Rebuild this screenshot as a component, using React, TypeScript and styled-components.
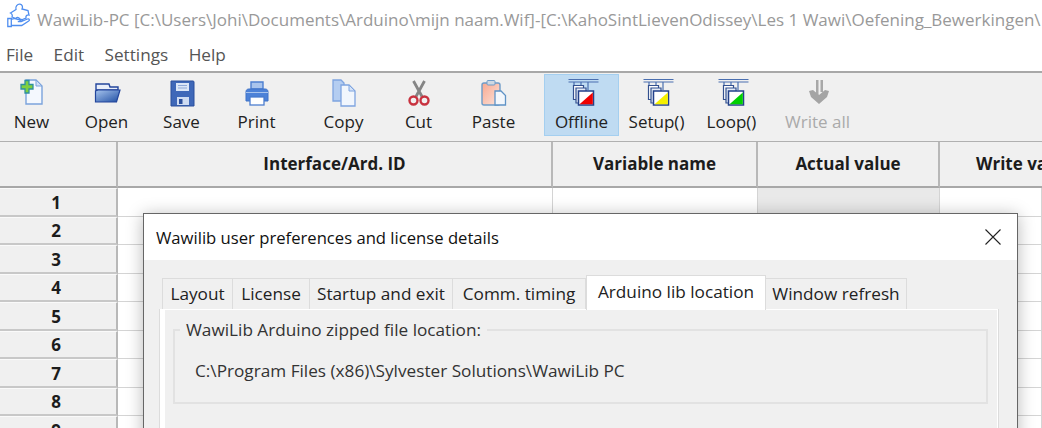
import React from 'react'
import styled, { createGlobalStyle } from 'styled-components'

const GlobalStyle = createGlobalStyle`
  html, body { margin: 0; padding: 0; background: #fff; }
  body { font-family: "Open Sans", "Noto Sans", "Liberation Sans", sans-serif; }
`

const Page = styled.div`
  position: relative;
  width: 1042px;
  height: 428px;
  overflow: hidden;
  background: #fff;
`
const TitleBar = styled.div`
  display: flex;
  align-items: center;
  height: 38px;
  padding-left: 7px;
  gap: 6px;
  white-space: nowrap;
  overflow: hidden;
  svg { margin-top: -6px; }
`
const TitleText = styled.span`
  font-size: 17px;
  color: #999;
`
const MenuBar = styled.div`
  display: flex;
  align-items: center;
  height: 33px;
  padding-left: 6px;
  gap: 20.4px;
  font-size: 17.2px;
  color: #555;
`
const Toolbar = styled.div`
  display: flex;
  height: 68px;
  background: #f0f0f0;
  border-top: 2px solid #a8a8a8;
  border-bottom: 1px solid #b0b0b0;
  box-sizing: content-box;
`
const ToolGroup = styled.div<{ $offset: number }>`
  display: flex;
  margin-left: ${({ $offset }) => $offset}px;
`
const ToolButton = styled.div<{ $active?: boolean; $disabled?: boolean }>`
  display: flex;
  flex-direction: column;
  align-items: center;
  box-sizing: border-box;
  width: 75px;
  height: 62px;
  margin-top: 1px;
  padding-top: 2px;
  font-size: 17px;
  line-height: 20px;
  white-space: nowrap;
  color: ${({ $disabled }) => ($disabled ? '#aaa' : '#222')};
  background: ${({ $active }) => ($active ? '#bfdbf2' : 'transparent')};
  border: 1px solid ${({ $active }) => ($active ? '#a4cff0' : 'transparent')};
  svg { display: block; flex: none; width: 34px; height: 34px; margin-bottom: 1px; }
`
const Grid = styled.div`
  display: grid;
  grid-template-columns: 118px 435px 205px 182px 1fr;
  grid-template-rows: 46px;
  grid-auto-rows: 28.5px;
`
const HeadCell = styled.div<{ $clipped?: boolean }>`
  display: flex;
  align-items: center;
  justify-content: ${({ $clipped }) => ($clipped ? 'flex-start' : 'center')};
  padding-left: ${({ $clipped }) => ($clipped ? 36 : 0)}px;
  padding-bottom: 1px;
  background: #f0f0f0;
  border-right: ${({ $clipped }) => ($clipped ? '0' : '2px solid #b8b8b8')};
  border-bottom: 2px solid #a8a8a8;
  font-size: 17px;
  font-weight: 700;
  color: #1c1c1c;
  white-space: nowrap;
  overflow: hidden;
`
const RowHead = styled.div`
  display: flex;
  align-items: center;
  justify-content: center;
  padding: 1px 4px 0 0;
  background: #f0f0f0;
  border-top: 1px solid #fafafa;
  border-right: 2px solid #b8b8b8;
  border-bottom: 2px solid #c8c8c8;
  font-size: 17px;
  font-weight: 700;
  color: #1c1c1c;
`
const Cell = styled.div<{ $shaded?: boolean }>`
  background: ${({ $shaded }) => ($shaded ? '#e9e9e9' : '#fff')};
  border-right: 1px solid #d4d4d4;
  border-bottom: 1px solid #d4d4d4;
`
const Dialog = styled.div`
  position: absolute;
  left: 143px;
  top: 213px;
  width: 875px;
  height: 260px;
  box-sizing: border-box;
  background: #f0f0f0;
  border: 1px solid #666;
  box-shadow: 0 2px 16px rgba(0, 0, 0, 0.28);
`
const DialogHead = styled.div`
  display: flex;
  align-items: center;
  justify-content: space-between;
  height: 46px;
  padding: 0 16px 0 12px;
  background: #fff;
  font-size: 16.65px;
  color: #111;
  svg { display: block; }
`
const DialogBody = styled.div`
  padding: 14px 19px 0 16px;
`
const TabStrip = styled.div`
  display: flex;
  align-items: flex-end;
  height: 35px;
  margin-left: 2px;
`
const Tab = styled.div<{ $active?: boolean; $width: number }>`
  display: flex;
  align-items: center;
  justify-content: center;
  box-sizing: border-box;
  width: ${({ $width }) => $width}px;
  height: ${({ $active }) => ($active ? 35 : 31)}px;
  margin-bottom: ${({ $active }) => ($active ? -1 : 0)}px;
  position: relative;
  z-index: ${({ $active }) => ($active ? 1 : 0)};
  padding-bottom: ${({ $active }) => ($active ? 4 : 1)}px;
  background: ${({ $active }) => ($active ? '#fff' : '#f0f0f0')};
  border: 1px solid #dcdcdc;
  border-bottom: 0;
  border-left-width: ${({ $active }) => ($active ? 1 : 0)}px;
  font-size: 17.2px;
  color: #222;
  white-space: nowrap;
  &:first-child { border-left-width: 1px; }
`
const Panel = styled.div`
  box-sizing: border-box;
  height: 180px;
  padding: 10px 9px 0 8px;
  border: 1px solid #dcdcdc;
  border-left: 5px solid #fff;
  border-top-color: #fff;
  border-right-color: #fff;
  box-shadow: -1px 0 0 #dcdcdc, 1px 0 0 #dcdcdc;
`
const GroupBox = styled.fieldset`
  box-sizing: border-box;
  height: 84px;
  margin: 0;
  padding: 0;
  border: 2px solid #e2e2e2;
  font-size: 17.2px;
  color: #333;
`
const GroupLegend = styled.legend`
  margin-left: 5px;
  padding: 0 6px;
  line-height: 20px;
  color: #333;
`
const PathText = styled.div`
  padding: 20px 0 0 20px;
  line-height: 22px;
`

const Logo = () => (
  <svg width="24" height="26" viewBox="0 0 24 26" fill="none" stroke="#4f8ef0" strokeWidth="1.300" style={{ flex: 'none' }}>
    <path d="M3.500 10L9 6.500C8 3.500 10.500.8 13 1.200c2.500.4 3 2.800 2 4.800l6 1.500 1 4.500c-2-.5-3.500 1-3 3l-6 2.500c.5-2.500-2.500-4-4-2L5 14c1-2-.5-3.500-1.500-4z" />
    <path d="M.8 15.500h3.500v8H.8zM4.300 16.500c2.500-1.500 4.500-1 6.500 0h3.500c1.600 0 1.600 2.200 0 2.200h-3.500M14.500 18.500l6-2.500c1.800-.6 2.500 1.100 1.200 2l-7 4.500H4.300" />
  </svg>
)

const NewIcon = () => (
  <svg viewBox="0 0 34 34">
    <path d="M11 3h10l6 6v18H11z" fill="#f4f8fe" stroke="#7ba3dc" strokeWidth="1.400" />
    <path d="M21 3v6h6z" fill="#cfe0f6" stroke="#7ba3dc" />
    <path d="M10 3.500h4v4h4v4.500h-4v4h-4v-4H6V7.500h4z" fill="#7fd03f" stroke="#2f8fa0" strokeWidth="1.300" />
  </svg>
)
const OpenIcon = () => (
  <svg viewBox="0 0 34 34">
    <defs>
      <linearGradient id="folder" x1="0" y1="0" x2="1" y2="1">
        <stop offset="0" stopColor="#a8c5ee" />
        <stop offset="1" stopColor="#1f4ea3" />
      </linearGradient>
    </defs>
    <path d="M6 7h13l1 3h8v3H6z" fill="#e8eefa" stroke="#23459c" strokeWidth="1.400" />
    <path d="M8 13h22l-3.500 12H5.500L5.500 14z" fill="url(#folder)" stroke="#23459c" strokeWidth="1.200" />
  </svg>
)
const SaveIcon = () => (
  <svg viewBox="0 0 34 34">
    <path d="M6 4h22a1 1 0 0 1 1 1v24H6z" fill="#3f68b8" stroke="#2b4f9c" />
    <rect x="11" y="6" width="13" height="8" fill="#dbe6f7" />
    <path d="M13 8.500h9M13 11h9" stroke="#8fa9d8" />
    <rect x="12" y="20" width="12" height="8" fill="#cfdcf2" />
    <rect x="14" y="22" width="3.500" height="5" fill="#2b4f9c" />
  </svg>
)
const PrintIcon = () => (
  <svg viewBox="0 0 34 34">
    <path d="M11 5h12v7H11z" fill="#a9c4ec" stroke="#4d7fd0" strokeWidth="1.400" />
    <path d="M9 12h16c2 0 3 1 3 3v9h-4v-4H10v4H6v-9c0-2 1-3 3-3z" fill="#4d82d8" stroke="#3f73c8" />
    <path d="M6 15.500h22" stroke="#a9c4ec" />
    <rect x="10" y="20" width="14" height="8" fill="#fff" stroke="#4d7fd0" strokeWidth="1.300" />
  </svg>
)
const CopyIcon = () => (
  <svg viewBox="0 0 34 34">
    <path d="M6 3h8l3 3v18H6z" fill="#b4cdf1" stroke="#7ea4e0" strokeWidth="1.300" />
    <path d="M14 8h8l6 6v15H14z" fill="#f1f6fd" stroke="#7ea4e0" strokeWidth="1.300" />
    <path d="M22 8v6h6z" fill="#d3e2f7" stroke="#7ea4e0" />
  </svg>
)
const CutIcon = () => (
  <svg viewBox="0 0 34 34" fill="none">
    <path d="M11.500 4l8.500 15.500M22.500 4L14 19.500" stroke="#858585" strokeWidth="2.800" />
    <circle cx="11.500" cy="23.500" r="4" stroke="#c8323f" strokeWidth="2.400" />
    <circle cx="22.500" cy="23.500" r="4" stroke="#c8323f" strokeWidth="2.400" />
  </svg>
)
const PasteIcon = () => (
  <svg viewBox="0 0 34 34">
    <defs>
      <linearGradient id="board" x1="0" y1="0" x2="1" y2="1">
        <stop offset="0" stopColor="#f9a88f" />
        <stop offset="1" stopColor="#fbe4dc" />
      </linearGradient>
    </defs>
    <rect x="5" y="6" width="18" height="22" rx="2" fill="url(#board)" stroke="#6e9cc8" strokeWidth="1.400" />
    <rect x="10" y="3.500" width="8" height="4.500" rx="1" fill="#cfd8e2" stroke="#6e9cc8" />
    <path d="M18 14h6l4.500 4.500V28H18z" fill="#f3f7fc" stroke="#5f93c6" strokeWidth="1.300" />
  </svg>
)
const StackIcon = ({ color }: { color: string }) => (
  <svg viewBox="0 0 34 34" fill="none">
    <path d="M3.500 2.500h30M3.500 5h30" stroke="#4a6fb0" strokeWidth="1.200" />
    <path d="M9 5v4M16 5v3M23 5v8" stroke="#4a6fb0" strokeWidth="1.200" />
    <path d="M8.500 8.500h10v14h-10z" fill="#fff" stroke="#33508f" strokeWidth="1.200" />
    <path d="M11 11h10v15H11z" fill="#e3eaf6" stroke="#33508f" strokeWidth="1.200" />
    <path d="M13.500 14h15v14h-15z" fill="#fff" stroke="#22408a" strokeWidth="1.500" />
    <path d="M27.800 15.500v11.800H14.500z" fill={color} />
  </svg>
)
const WriteIcon = () => (
  <svg viewBox="0 0 34 34">
    <path d="M15 3h2.500v15H15zM19.500 3H22v12h-2.500z" fill="#a8a8a8" />
    <path d="M8 14l4-1 6 5 6-5 4 1-2 6-8 7-8-7z" fill="#a4a4a4" />
  </svg>
)

const tools = [
  { offset: -6, items: [
    { label: 'New', icon: <NewIcon /> },
    { label: 'Open', icon: <OpenIcon /> },
    { label: 'Save', icon: <SaveIcon /> },
    { label: 'Print', icon: <PrintIcon /> },
  ] },
  { offset: 12, items: [
    { label: 'Copy', icon: <CopyIcon /> },
    { label: 'Cut', icon: <CutIcon /> },
    { label: 'Paste', icon: <PasteIcon /> },
  ] },
  { offset: 13, items: [
    { label: 'Offline', icon: <StackIcon color="#f00000" />, active: true },
    { label: 'Setup()', icon: <StackIcon color="#f5f000" /> },
    { label: 'Loop()', icon: <StackIcon color="#00d000" /> },
  ] },
  { offset: 11, items: [
    { label: 'Write all', icon: <WriteIcon />, disabled: true },
  ] },
]

const columns = ['Interface/Ard. ID', 'Variable name', 'Actual value']
const tabs = [
  { label: 'Layout', width: 71 },
  { label: 'License', width: 77 },
  { label: 'Startup and exit', width: 143 },
  { label: 'Comm. timing', width: 133 },
  { label: 'Arduino lib location', width: 180, active: true },
  { label: 'Window refresh', width: 141 },
]

export default function App() {
  return (
    <Page>
      <GlobalStyle />
      <TitleBar>
        <Logo />
        <TitleText>WawiLib-PC [C:\Users\Johi\Documents\Arduino\mijn naam.Wif]-[C:\KahoSintLievenOdissey\Les 1 Wawi\Oefening_Bewerkingen\</TitleText>
      </TitleBar>
      <MenuBar>
        <span>File</span>
        <span>Edit</span>
        <span>Settings</span>
        <span>Help</span>
      </MenuBar>
      <Toolbar>
        {tools.map((group, i) => (
          <ToolGroup key={i} $offset={group.offset}>
            {group.items.map((tool: any) => (
              <ToolButton key={tool.label} $active={tool.active} $disabled={tool.disabled}>
                {tool.icon}
                {tool.label}
              </ToolButton>
            ))}
          </ToolGroup>
        ))}
      </Toolbar>
      <Grid>
        <HeadCell />
        {columns.map((name) => <HeadCell key={name}>{name}</HeadCell>)}
        <HeadCell $clipped>Write value</HeadCell>
        {[1, 2, 3, 4, 5, 6, 7, 8, 9].map((row) => (
          <React.Fragment key={row}>
            <RowHead>{row}</RowHead>
            <Cell />
            <Cell />
            <Cell $shaded />
            <Cell />
          </React.Fragment>
        ))}
      </Grid>
      <Dialog>
        <DialogHead>
          Wawilib user preferences and license details
          <svg width="16" height="16" viewBox="0 0 16 16" stroke="#222" strokeWidth="1.100">
            <path d="M.5.500l15 15M15.500.500l-15 15" />
          </svg>
        </DialogHead>
        <DialogBody>
          <TabStrip>
            {tabs.map((tab) => (
              <Tab key={tab.label} $width={tab.width} $active={tab.active}>{tab.label}</Tab>
            ))}
          </TabStrip>
          <Panel>
            <GroupBox>
              <GroupLegend>WawiLib Arduino zipped file location:</GroupLegend>
              <PathText>C:\Program Files (x86)\Sylvester Solutions\WawiLib PC</PathText>
            </GroupBox>
          </Panel>
        </DialogBody>
      </Dialog>
    </Page>
  )
}
